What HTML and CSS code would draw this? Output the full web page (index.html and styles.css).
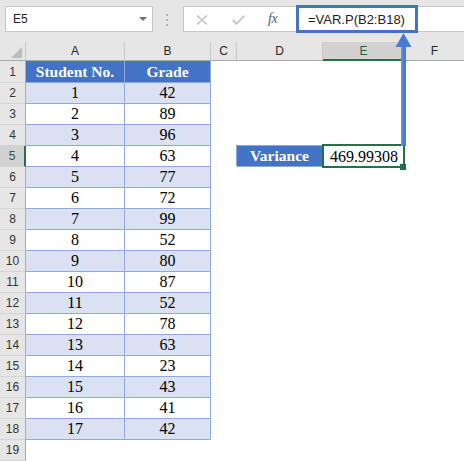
FILE: index.html
```html
<!DOCTYPE html>
<html>
<head>
<meta charset="utf-8">
<link rel="stylesheet" href="styles.css">
</head>
<body>
<div class="app">
  <div class="toolbar">
    <div class="namebox"><span>E5</span><i class="caret"></i></div>
    <div class="grip"><b></b><b></b><b></b></div>
    <div class="buttons">
      <svg class="ico-x" width="12" height="10" viewBox="0 0 12 10"><path d="M1 0.5 L11 9.5 M11 0.5 L1 9.5" stroke="#c4c4c4" stroke-width="1.6" fill="none"/></svg>
      <svg class="ico-ok" width="13" height="10" viewBox="0 0 13 10"><path d="M0.8 5 L4.5 8.8 L12.2 0.8" stroke="#c4c4c4" stroke-width="1.8" fill="none"/></svg>
      <span class="fx">fx</span>
    </div>
    <div class="formula">
      <div class="fbox">=VAR.P(B2:B18)</div>
      <div class="frest"></div>
    </div>
  </div>

  <div class="sheet">
    <div class="corner"><i></i></div>
    <div class="ch">A</div><div class="ch">B</div><div class="ch">C</div><div class="ch">D</div><div class="ch sel">E</div><div class="ch last">F</div>

    <div class="rh">1</div><div class="t h">Student No.</div><div class="t h">Grade</div><div class="c"></div><div class="c"></div><div class="c"></div><div class="c"></div>
    <div class="rh">2</div><div class="t alt">1</div><div class="t alt">42</div><div class="c"></div><div class="c"></div><div class="c"></div><div class="c"></div>
    <div class="rh">3</div><div class="t">2</div><div class="t">89</div><div class="c"></div><div class="c"></div><div class="c"></div><div class="c"></div>
    <div class="rh">4</div><div class="t alt">3</div><div class="t alt">96</div><div class="c"></div><div class="c"></div><div class="c"></div><div class="c"></div>
    <div class="rh sel">5</div><div class="t">4</div><div class="t">63</div><div class="c"></div><div class="var">Variance</div><div class="val">469.99308<span class="selbox"></span><span class="handle"></span></div><div class="c"></div>
    <div class="rh">6</div><div class="t alt">5</div><div class="t alt">77</div><div class="c"></div><div class="c"></div><div class="c"></div><div class="c"></div>
    <div class="rh">7</div><div class="t">6</div><div class="t">72</div><div class="c"></div><div class="c"></div><div class="c"></div><div class="c"></div>
    <div class="rh">8</div><div class="t alt">7</div><div class="t alt">99</div><div class="c"></div><div class="c"></div><div class="c"></div><div class="c"></div>
    <div class="rh">9</div><div class="t">8</div><div class="t">52</div><div class="c"></div><div class="c"></div><div class="c"></div><div class="c"></div>
    <div class="rh">10</div><div class="t alt">9</div><div class="t alt">80</div><div class="c"></div><div class="c"></div><div class="c"></div><div class="c"></div>
    <div class="rh">11</div><div class="t">10</div><div class="t">87</div><div class="c"></div><div class="c"></div><div class="c"></div><div class="c"></div>
    <div class="rh">12</div><div class="t alt">11</div><div class="t alt">52</div><div class="c"></div><div class="c"></div><div class="c"></div><div class="c"></div>
    <div class="rh">13</div><div class="t">12</div><div class="t">78</div><div class="c"></div><div class="c"></div><div class="c"></div><div class="c"></div>
    <div class="rh">14</div><div class="t alt">13</div><div class="t alt">63</div><div class="c"></div><div class="c"></div><div class="c"></div><div class="c"></div>
    <div class="rh">15</div><div class="t">14</div><div class="t">23</div><div class="c"></div><div class="c"></div><div class="c"></div><div class="c"></div>
    <div class="rh">16</div><div class="t alt">15</div><div class="t alt">43</div><div class="c"></div><div class="c"></div><div class="c"></div><div class="c"></div>
    <div class="rh">17</div><div class="t">16</div><div class="t">41</div><div class="c"></div><div class="c"></div><div class="c"></div><div class="c"></div>
    <div class="rh">18</div><div class="t alt">17</div><div class="t alt">42</div><div class="c"></div><div class="c"></div><div class="c"></div><div class="c"></div>
    <div class="rh">19</div><div class="c"></div><div class="c"></div><div class="c"></div><div class="c"></div><div class="c"></div><div class="c"></div>
  </div>

  <svg class="arrow" width="464" height="461" viewBox="0 0 464 461">
    <rect x="401" y="45" width="5" height="101" fill="#4a7bd2"/>
    <rect x="401" y="45" width="1.5" height="101" fill="#6d95dc"/>
    <polygon points="403.5,33 411.5,47 395.5,47" fill="#4a7bd2"/>
  </svg>
</div>
</body>
</html>
```

FILE: styles.css
```css
* { box-sizing: border-box; }
html, body { margin: 0; padding: 0; }
body { background: #e6e6e6; overflow: hidden; }

.app {
  position: relative;
  width: 464px;
  height: 461px;
  overflow: hidden;
  font-family: "Liberation Sans", Arial, sans-serif;
}

/* ---------- formula toolbar ---------- */
.toolbar {
  display: flex;
  align-items: flex-start;
  height: 42px;
  padding: 6px 0 0 5px;
  background: #e6e6e6;
}
.namebox {
  position: relative;
  display: flex;
  align-items: center;
  width: 148px;
  height: 26px;
  padding-left: 7px;
  background: #fff;
  border: 1px solid #c6c6c6;
  font-size: 12px;
  color: #222;
}
.caret {
  position: absolute;
  right: 5px;
  top: 10px;
  width: 0;
  height: 0;
  border-left: 4px solid transparent;
  border-right: 4px solid transparent;
  border-top: 4px solid #707070;
}
.grip {
  display: flex;
  flex-direction: column;
  gap: 3px;
  margin: 8px 0 0 13px;
}
.grip b {
  display: block;
  width: 2px;
  height: 2px;
  background: #b4b4b4;
}
.buttons {
  display: flex;
  align-items: center;
  width: 113px;
  height: 26px;
  margin-left: 15px;
  padding-left: 12px;
  background: #fff;
  border: 1px solid #c6c6c6;
  border-right: none;
}
.ico-x { margin-top: 1px; }
.ico-ok { margin-left: 24px; margin-top: 1px; }
.fx {
  margin-left: 23px;
  font-family: "Liberation Serif", "Times New Roman", serif;
  font-style: italic;
  font-size: 14px;
  color: #5a5a5a;
  letter-spacing: -0.5px;
}
.formula {
  flex: 1;
  display: flex;
  align-items: flex-start;
}
.fbox {
  display: flex;
  align-items: center;
  width: 122px;
  height: 28px;
  margin-top: -1px;
  padding-left: 9px;
  background: #fff;
  border: 3px solid #4472c4;
  font-size: 13px;
  color: #222;
}
.frest {
  flex: 1;
  height: 26px;
  background: #fff;
  border-top: 1px solid #c6c6c6;
  border-bottom: 1px solid #c6c6c6;
}

/* ---------- sheet grid ---------- */
.sheet {
  display: grid;
  grid-template-columns: 26px 99px 86px 26px 86px 82px 1fr;
  grid-template-rows: 19px 22px repeat(18, 21px);
  background: #fff;
}
.corner {
  position: relative;
  background: #e6e6e6;
  border-right: 1px solid #c8c8c8;
  border-bottom: 1px solid #ababab;
}
.corner i {
  position: absolute;
  right: 3px;
  bottom: 2px;
  width: 0;
  height: 0;
  border-left: 11px solid transparent;
  border-bottom: 11px solid #bdbdbd;
}
.ch {
  display: flex;
  align-items: center;
  justify-content: center;
  background: #e6e6e6;
  border-right: 1px solid #c8c8c8;
  border-bottom: 1px solid #ababab;
  font-size: 12px;
  color: #262626;
}
.ch.last { border-right: none; }
.ch.sel {
  background: #d2d2d2;
  border-bottom: 2px solid #217346;
  color: #1e5e3a;
}
.rh {
  display: flex;
  align-items: center;
  justify-content: center;
  background: #e6e6e6;
  border-right: 1px solid #ababab;
  border-bottom: 1px solid #d4d4d4;
  font-size: 12px;
  color: #333;
}
.rh.sel {
  background: #d2d2d2;
  border-right: 2px solid #217346;
  color: #1e5e3a;
}
.c { background: #fff; }
.t {
  display: flex;
  align-items: center;
  justify-content: center;
  border-right: 1px solid #8ea9db;
  border-bottom: 1px solid #8ea9db;
  font-family: "Liberation Serif", "Times New Roman", serif;
  font-size: 16px;
  color: #000;
  background: #fff;
}
.t.alt { background: #d9e1f2; }
.t.h {
  background: #4472c4;
  color: #fff;
  font-weight: bold;
  font-size: 15.5px;
}
.var {
  display: flex;
  align-items: center;
  justify-content: center;
  background: #4472c4;
  border-right: 1px solid #8ea9db;
  border-bottom: 1px solid #8ea9db;
  box-shadow: -1px -1px 0 #8ea9db;
  font-family: "Liberation Serif", "Times New Roman", serif;
  font-weight: bold;
  font-size: 15.5px;
  color: #fff;
}
.val {
  position: relative;
  display: flex;
  align-items: center;
  justify-content: center;
  background: #fff;
  font-family: "Liberation Serif", "Times New Roman", serif;
  font-size: 16px;
  color: #000;
}
.selbox {
  position: absolute;
  left: -1px;
  top: -2px;
  width: 83px;
  height: 24px;
  border: 2px solid #217346;
}
.handle {
  position: absolute;
  left: 77px;
  top: 18px;
  width: 6px;
  height: 6px;
  background: #217346;
}

.arrow {
  position: absolute;
  left: 0;
  top: 0;
  pointer-events: none;
}
```
